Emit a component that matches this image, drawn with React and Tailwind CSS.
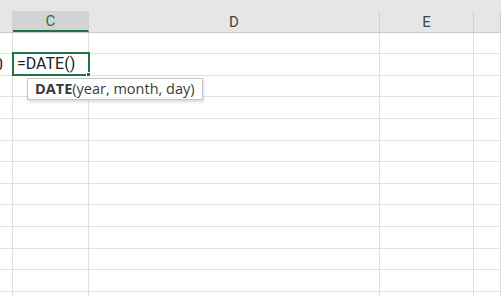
import React from 'react';

// column widths, each one includes its own right border
const cols = [
    { key: 'B', w: 'w-[13px]' },
    { key: 'C', w: 'w-[76px]' },
    { key: 'D', w: 'w-[291px]' },
    { key: 'E', w: 'w-[94px]' },
    { key: 'F', w: 'flex-1' },
];

// row heights alternate a bit because Excel rows are 21.6px at this zoom
const rows = [21, 22, 21, 22, 22, 21, 22, 21, 22, 22, 21, 22, 22];

const App = () => {
    return (
        <div className="relative w-[501px] h-[296px] overflow-hidden bg-white" style={{ fontFamily: 'Roboto, "Liberation Sans", sans-serif' }}>
            {/* header band */}
            <div className="h-[33px] bg-[#e6e6e6] border-b border-[#c8c8c8] flex flex-col">
                <div className="h-[11px]" />
                <div className="flex flex-1">
                    {cols.map(c => (
                        <div key={c.key}
                            className={`${c.w} h-full border-r border-[#d0d0d0] flex items-center justify-center pt-[2px] text-[15px] leading-none ${c.key === 'C' ? 'bg-[#d3d3d3] text-[#217346] border-b-2 border-b-[#217346]' : 'text-[#444]'}`}>
                            {c.key === 'B' || c.key === 'F' ? '' : c.key}
                        </div>
                    ))}
                </div>
            </div>

            {/* grid body */}
            {rows.map((h, i) => (
                <div key={i} className={`flex ${h === 21 ? 'h-[21px]' : 'h-[22px]'}`}>
                    {cols.map(c => (
                        <div key={c.key} className={`${c.w} h-full border-r border-b border-[#e1e1e1] overflow-hidden`}>
                            {i === 1 && c.key === 'B' && (
                                <span className="block -ml-[6px] text-[16px] leading-[22px] text-[#222]">0</span>
                            )}
                        </div>
                    ))}
                </div>
            ))}

            {/* active cell C */}
            <div className="absolute left-[12px] top-[52px] w-[78px] h-[24px] border-2 border-[#217346] flex items-center pl-[3px]">
                <span className="text-[16px] leading-none text-[#222]">=DATE()</span>
                <div className="absolute -right-[3px] -bottom-[3px] w-[5px] h-[5px] bg-[#217346] border border-white" />
            </div>

            {/* function tooltip */}
            <div className="absolute left-[27px] top-[78px] h-[22px] px-[7px] flex items-center bg-white border border-[#c6c6c6] shadow-[1px_2px_3px_rgba(0,0,0,0.15)] text-[14.5px] leading-none text-[#3a3a3a]" style={{ fontFamily: '"Open Sans", "Liberation Sans", sans-serif' }}>
                <span className="font-bold">DATE</span>(year, month, day)
            </div>
        </div>
    );
};

export default App;
